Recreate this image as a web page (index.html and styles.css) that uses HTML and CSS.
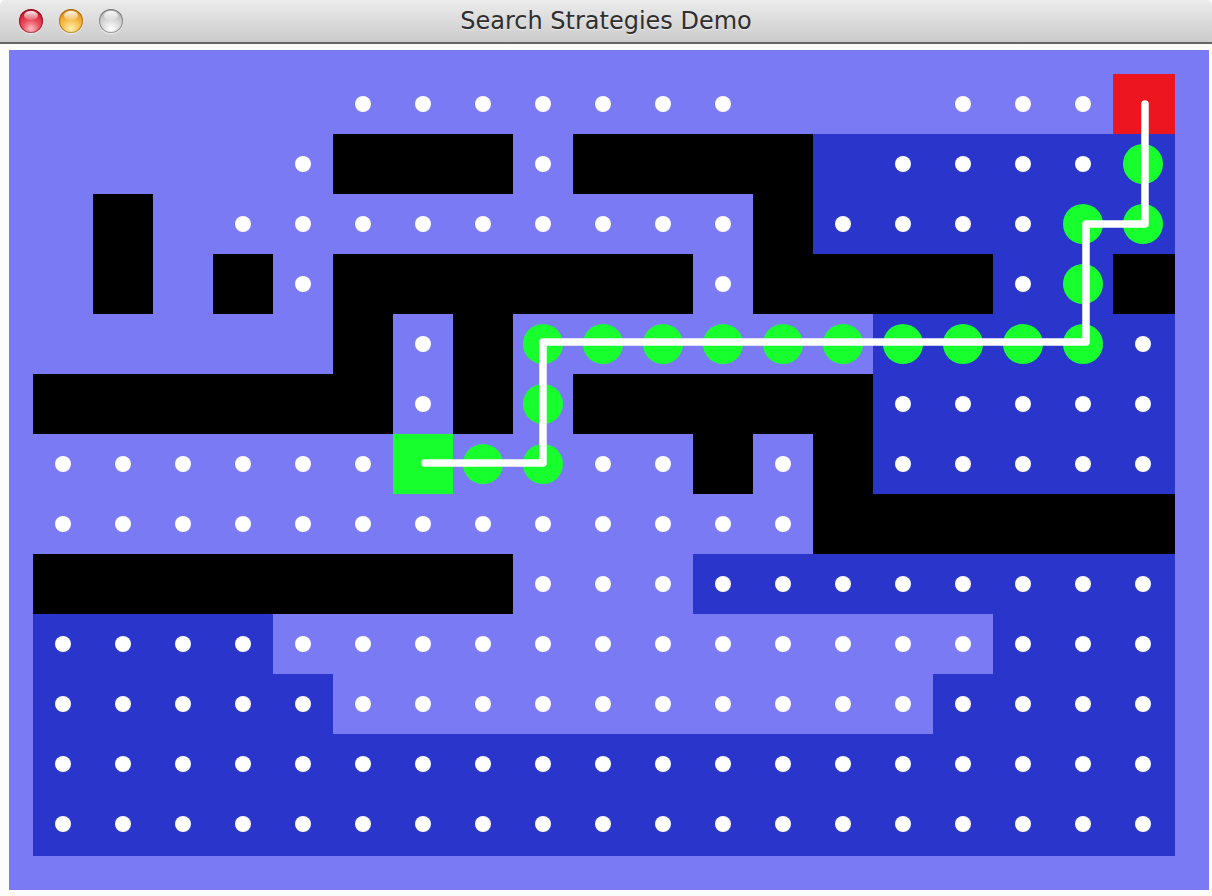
FILE: index.html
```html
<!DOCTYPE html>
<html lang="en">
<head>
<meta charset="utf-8">
<title>Search Strategies Demo</title>
<link rel="stylesheet" href="styles.css">
</head>
<body>
<div class="window">
  <header class="titlebar">
    <div class="lights">
      <span class="light close"></span>
      <span class="light minimize"></span>
      <span class="light zoom"></span>
    </div>
    <div class="title">Search Strategies Demo</div>
    <div></div>
  </header>
  <main class="content">
    <div class="board">
      <div class="grid">
        <!-- row 0 -->
        <div class="cell"></div><div class="cell"></div><div class="cell"></div><div class="cell"></div><div class="cell"></div>
        <div class="cell"><i class="dot"></i></div><div class="cell"><i class="dot"></i></div><div class="cell"><i class="dot"></i></div><div class="cell"><i class="dot"></i></div><div class="cell"><i class="dot"></i></div><div class="cell"><i class="dot"></i></div><div class="cell"><i class="dot"></i></div>
        <div class="cell"></div><div class="cell"></div><div class="cell"></div>
        <div class="cell"><i class="dot"></i></div><div class="cell"><i class="dot"></i></div><div class="cell"><i class="dot"></i></div>
        <div class="cell goal"></div>
        <!-- row 1 -->
        <div class="cell"></div><div class="cell"></div><div class="cell"></div><div class="cell"></div>
        <div class="cell"><i class="dot"></i></div>
        <div class="cell wall"></div><div class="cell wall"></div><div class="cell wall"></div>
        <div class="cell"><i class="dot"></i></div>
        <div class="cell wall"></div><div class="cell wall"></div><div class="cell wall"></div><div class="cell wall"></div>
        <div class="cell dark"></div>
        <div class="cell dark"><i class="dot"></i></div><div class="cell dark"><i class="dot"></i></div><div class="cell dark"><i class="dot"></i></div><div class="cell dark"><i class="dot"></i></div>
        <div class="cell dark"><i class="node"></i></div>
        <!-- row 2 -->
        <div class="cell"></div><div class="cell wall"></div><div class="cell"></div>
        <div class="cell"><i class="dot"></i></div><div class="cell"><i class="dot"></i></div><div class="cell"><i class="dot"></i></div><div class="cell"><i class="dot"></i></div><div class="cell"><i class="dot"></i></div><div class="cell"><i class="dot"></i></div><div class="cell"><i class="dot"></i></div><div class="cell"><i class="dot"></i></div><div class="cell"><i class="dot"></i></div>
        <div class="cell wall"></div>
        <div class="cell dark"><i class="dot"></i></div><div class="cell dark"><i class="dot"></i></div><div class="cell dark"><i class="dot"></i></div><div class="cell dark"><i class="dot"></i></div>
        <div class="cell dark"><i class="node"></i></div><div class="cell dark"><i class="node"></i></div>
        <!-- row 3 -->
        <div class="cell"></div><div class="cell wall"></div><div class="cell"></div><div class="cell wall"></div>
        <div class="cell"><i class="dot"></i></div>
        <div class="cell wall"></div><div class="cell wall"></div><div class="cell wall"></div><div class="cell wall"></div><div class="cell wall"></div><div class="cell wall"></div>
        <div class="cell"><i class="dot"></i></div>
        <div class="cell wall"></div><div class="cell wall"></div><div class="cell wall"></div><div class="cell wall"></div>
        <div class="cell dark"><i class="dot"></i></div>
        <div class="cell dark"><i class="node"></i></div>
        <div class="cell wall"></div>
        <!-- row 4 -->
        <div class="cell"></div><div class="cell"></div><div class="cell"></div><div class="cell"></div><div class="cell"></div>
        <div class="cell wall"></div>
        <div class="cell"><i class="dot"></i></div>
        <div class="cell wall"></div>
        <div class="cell"><i class="node"></i></div><div class="cell"><i class="node"></i></div><div class="cell"><i class="node"></i></div><div class="cell"><i class="node"></i></div><div class="cell"><i class="node"></i></div><div class="cell"><i class="node"></i></div>
        <div class="cell dark"><i class="node"></i></div><div class="cell dark"><i class="node"></i></div><div class="cell dark"><i class="node"></i></div><div class="cell dark"><i class="node"></i></div>
        <div class="cell dark"><i class="dot"></i></div>
        <!-- row 5 -->
        <div class="cell wall"></div><div class="cell wall"></div><div class="cell wall"></div><div class="cell wall"></div><div class="cell wall"></div><div class="cell wall"></div>
        <div class="cell"><i class="dot"></i></div>
        <div class="cell wall"></div>
        <div class="cell"><i class="node"></i></div>
        <div class="cell wall"></div><div class="cell wall"></div><div class="cell wall"></div><div class="cell wall"></div><div class="cell wall"></div>
        <div class="cell dark"><i class="dot"></i></div><div class="cell dark"><i class="dot"></i></div><div class="cell dark"><i class="dot"></i></div><div class="cell dark"><i class="dot"></i></div><div class="cell dark"><i class="dot"></i></div>
        <!-- row 6 -->
        <div class="cell"><i class="dot"></i></div><div class="cell"><i class="dot"></i></div><div class="cell"><i class="dot"></i></div><div class="cell"><i class="dot"></i></div><div class="cell"><i class="dot"></i></div><div class="cell"><i class="dot"></i></div>
        <div class="cell start"></div>
        <div class="cell"><i class="node"></i></div><div class="cell"><i class="node"></i></div>
        <div class="cell"><i class="dot"></i></div><div class="cell"><i class="dot"></i></div>
        <div class="cell wall"></div>
        <div class="cell"><i class="dot"></i></div>
        <div class="cell wall"></div>
        <div class="cell dark"><i class="dot"></i></div><div class="cell dark"><i class="dot"></i></div><div class="cell dark"><i class="dot"></i></div><div class="cell dark"><i class="dot"></i></div><div class="cell dark"><i class="dot"></i></div>
        <!-- row 7 -->
        <div class="cell"><i class="dot"></i></div><div class="cell"><i class="dot"></i></div><div class="cell"><i class="dot"></i></div><div class="cell"><i class="dot"></i></div><div class="cell"><i class="dot"></i></div><div class="cell"><i class="dot"></i></div><div class="cell"><i class="dot"></i></div><div class="cell"><i class="dot"></i></div><div class="cell"><i class="dot"></i></div><div class="cell"><i class="dot"></i></div><div class="cell"><i class="dot"></i></div><div class="cell"><i class="dot"></i></div><div class="cell"><i class="dot"></i></div>
        <div class="cell wall"></div><div class="cell wall"></div><div class="cell wall"></div><div class="cell wall"></div><div class="cell wall"></div><div class="cell wall"></div>
        <!-- row 8 -->
        <div class="cell wall"></div><div class="cell wall"></div><div class="cell wall"></div><div class="cell wall"></div><div class="cell wall"></div><div class="cell wall"></div><div class="cell wall"></div><div class="cell wall"></div>
        <div class="cell"><i class="dot"></i></div><div class="cell"><i class="dot"></i></div><div class="cell"><i class="dot"></i></div>
        <div class="cell dark"><i class="dot"></i></div><div class="cell dark"><i class="dot"></i></div><div class="cell dark"><i class="dot"></i></div><div class="cell dark"><i class="dot"></i></div><div class="cell dark"><i class="dot"></i></div><div class="cell dark"><i class="dot"></i></div><div class="cell dark"><i class="dot"></i></div><div class="cell dark"><i class="dot"></i></div>
        <!-- row 9 -->
        <div class="cell dark"><i class="dot"></i></div><div class="cell dark"><i class="dot"></i></div><div class="cell dark"><i class="dot"></i></div><div class="cell dark"><i class="dot"></i></div>
        <div class="cell"><i class="dot"></i></div><div class="cell"><i class="dot"></i></div><div class="cell"><i class="dot"></i></div><div class="cell"><i class="dot"></i></div><div class="cell"><i class="dot"></i></div><div class="cell"><i class="dot"></i></div><div class="cell"><i class="dot"></i></div><div class="cell"><i class="dot"></i></div><div class="cell"><i class="dot"></i></div><div class="cell"><i class="dot"></i></div><div class="cell"><i class="dot"></i></div><div class="cell"><i class="dot"></i></div>
        <div class="cell dark"><i class="dot"></i></div><div class="cell dark"><i class="dot"></i></div><div class="cell dark"><i class="dot"></i></div>
        <!-- row 10 -->
        <div class="cell dark"><i class="dot"></i></div><div class="cell dark"><i class="dot"></i></div><div class="cell dark"><i class="dot"></i></div><div class="cell dark"><i class="dot"></i></div><div class="cell dark"><i class="dot"></i></div>
        <div class="cell"><i class="dot"></i></div><div class="cell"><i class="dot"></i></div><div class="cell"><i class="dot"></i></div><div class="cell"><i class="dot"></i></div><div class="cell"><i class="dot"></i></div><div class="cell"><i class="dot"></i></div><div class="cell"><i class="dot"></i></div><div class="cell"><i class="dot"></i></div><div class="cell"><i class="dot"></i></div><div class="cell"><i class="dot"></i></div>
        <div class="cell dark"><i class="dot"></i></div><div class="cell dark"><i class="dot"></i></div><div class="cell dark"><i class="dot"></i></div><div class="cell dark"><i class="dot"></i></div>
        <!-- row 11 -->
        <div class="cell dark"><i class="dot"></i></div><div class="cell dark"><i class="dot"></i></div><div class="cell dark"><i class="dot"></i></div><div class="cell dark"><i class="dot"></i></div><div class="cell dark"><i class="dot"></i></div><div class="cell dark"><i class="dot"></i></div><div class="cell dark"><i class="dot"></i></div><div class="cell dark"><i class="dot"></i></div><div class="cell dark"><i class="dot"></i></div><div class="cell dark"><i class="dot"></i></div><div class="cell dark"><i class="dot"></i></div><div class="cell dark"><i class="dot"></i></div><div class="cell dark"><i class="dot"></i></div><div class="cell dark"><i class="dot"></i></div><div class="cell dark"><i class="dot"></i></div><div class="cell dark"><i class="dot"></i></div><div class="cell dark"><i class="dot"></i></div><div class="cell dark"><i class="dot"></i></div><div class="cell dark"><i class="dot"></i></div>
        <!-- row 12 -->
        <div class="cell dark"><i class="dot"></i></div><div class="cell dark"><i class="dot"></i></div><div class="cell dark"><i class="dot"></i></div><div class="cell dark"><i class="dot"></i></div><div class="cell dark"><i class="dot"></i></div><div class="cell dark"><i class="dot"></i></div><div class="cell dark"><i class="dot"></i></div><div class="cell dark"><i class="dot"></i></div><div class="cell dark"><i class="dot"></i></div><div class="cell dark"><i class="dot"></i></div><div class="cell dark"><i class="dot"></i></div><div class="cell dark"><i class="dot"></i></div><div class="cell dark"><i class="dot"></i></div><div class="cell dark"><i class="dot"></i></div><div class="cell dark"><i class="dot"></i></div><div class="cell dark"><i class="dot"></i></div><div class="cell dark"><i class="dot"></i></div><div class="cell dark"><i class="dot"></i></div><div class="cell dark"><i class="dot"></i></div>

        <svg class="path" viewBox="0 0 1142 782" width="1142" height="782" aria-hidden="true">
          <polyline points="392,389 510,389 510,268 1053,268 1053,150 1112,150 1112,30" fill="none" stroke="#ffffff" stroke-width="7.5" stroke-linecap="round" stroke-linejoin="round"/>
        </svg>
      </div>
    </div>
  </main>
</div>
</body>
</html>
```

FILE: styles.css
```css
* { box-sizing: border-box; }

html, body {
  margin: 0;
  padding: 0;
}

body {
  width: 1212px;
  height: 896px;
  overflow: hidden;
  background: #fcfcfa;
  font-family: "DejaVu Sans", "Liberation Sans", sans-serif;
}

.window {
  width: 1212px;
  height: 896px;
  display: flex;
  flex-direction: column;
  background: #fcfcfa;
}

/* ---------- title bar ---------- */
.titlebar {
  flex: none;
  height: 44px;
  display: grid;
  grid-template-columns: 1fr auto 1fr;
  align-items: center;
  background: linear-gradient(#ececec, #d8d8d8 60%, #cccccc);
  border-bottom: 2px solid #666666;
  border-radius: 5px 5px 0 0;
}

.lights {
  display: flex;
  gap: 16px;
  padding-left: 19px;
  padding-bottom: 1px;
}

.light {
  position: relative;
  width: 24px;
  height: 24px;
  border-radius: 50%;
}

.light::after {
  content: "";
  position: absolute;
  left: 5px;
  top: 2px;
  width: 14px;
  height: 9px;
  border-radius: 50%;
  background: linear-gradient(rgba(255, 255, 255, 0.95), rgba(255, 255, 255, 0.15));
}

.light.close {
  background: radial-gradient(circle at 50% 82%, #ffc0c6 0%, #ee5463 35%, #cf1c31 70%, #99101d 100%);
  box-shadow: inset 0 0 0 1px rgba(110, 10, 20, 0.55), 0 1px 1px rgba(255, 255, 255, 0.7);
}

.light.minimize {
  background: radial-gradient(circle at 50% 82%, #fff0b0 0%, #f8c458 35%, #e69a1c 70%, #b56d08 100%);
  box-shadow: inset 0 0 0 1px rgba(130, 80, 0, 0.55), 0 1px 1px rgba(255, 255, 255, 0.7);
}

.light.zoom {
  background: radial-gradient(circle at 50% 82%, #ffffff 0%, #dedede 35%, #bdbdbd 70%, #8f8f8f 100%);
  box-shadow: inset 0 0 0 1px rgba(70, 70, 70, 0.5), 0 1px 1px rgba(255, 255, 255, 0.7);
}

.title {
  font-size: 24px;
  line-height: 42px;
  color: #2f2f2f;
  text-shadow: 0 1px 0 rgba(255, 255, 255, 0.55);
  white-space: nowrap;
}

/* ---------- content ---------- */
.content {
  flex: 1;
  padding: 6px 3px 6px 9px;
}

.board {
  width: 1200px;
  height: 840px;
  padding: 24px 0 0 24px;
  background: #7b7af5;
}

.grid {
  position: relative;
  width: 1142px;
  height: 782px;
  display: grid;
  grid-template-columns: repeat(18, 60px) 62px;
  grid-template-rows: repeat(12, 60px) 62px;
}

.cell {
  display: flex;
  align-items: center;
  justify-content: center;
}

.grid > .cell:nth-of-type(19n) {
  padding-right: 2px;
}

.grid > .cell:nth-of-type(n+229) {
  padding-bottom: 2px;
}

.dark  { background: #2a35cc; }
.wall  { background: #000000; }
.start { background: #18ff2e; }
.goal  { background: #ed151e; }

.dot {
  width: 16px;
  height: 16px;
  border-radius: 50%;
  background: #ffffff;
}

.node {
  width: 40px;
  height: 40px;
  border-radius: 50%;
  background: #18ff2e;
}

.path {
  position: absolute;
  left: 0;
  top: 0;
  pointer-events: none;
}
```
